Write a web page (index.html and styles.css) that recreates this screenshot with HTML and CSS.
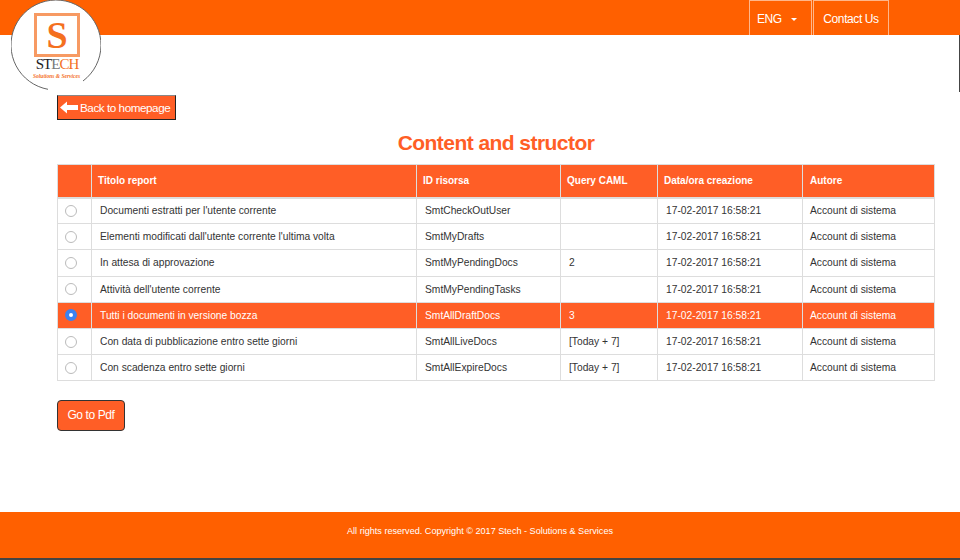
FILE: index.html
```html
<!DOCTYPE html>
<html lang="it">
<head>
    <meta charset="UTF-8">
    <title>Content and structor</title>
    <link rel="stylesheet" href="styles.css">
</head>
<body>
    <header class="topbar">
        <div class="logo">
            <svg class="logo-ring" width="90" height="90" viewBox="0 0 90 90"><path d="M37 89.3 A45 45 0 1 1 72 81" fill="none" stroke="#666" stroke-width="1"/></svg>
            <div class="logo-box"><span class="logo-s">S</span></div>
            <div class="logo-name">ST<span class="logo-te">E</span><span class="logo-ch">CH</span></div>
            <div class="logo-tag">Solutions &amp; Services</div>
        </div>
        <nav class="topnav">
            <a class="topnav-item lang">ENG <span class="caret"></span></a>
            <a class="topnav-item contact">Contact Us</a>
        </nav>
    </header>

    <main class="content">
        <a class="back-btn">
            <svg class="back-icon" width="18" height="13" viewBox="0 0 18 13"><path d="M0 6.5 L7 0.5 V4 H18 V9 H7 V12.5 Z" fill="#fff"/></svg>
            Back to homepage
        </a>
        <h1>Content and structor</h1>

        <table class="report-table">
            <thead>
                <tr>
                    <th class="col-radio"></th>
                    <th class="col-title">Titolo report</th>
                    <th class="col-id">ID risorsa</th>
                    <th class="col-query">Query CAML</th>
                    <th class="col-date">Data/ora creazione</th>
                    <th class="col-author">Autore</th>
                </tr>
            </thead>
            <tbody>
                <tr>
                    <td class="radio-cell"><span class="radio"></span></td>
                    <td>Documenti estratti per l'utente corrente</td>
                    <td>SmtCheckOutUser</td>
                    <td></td>
                    <td>17-02-2017 16:58:21</td>
                    <td class="author-cell">Account di sistema</td>
                </tr>
                <tr>
                    <td class="radio-cell"><span class="radio"></span></td>
                    <td>Elementi modificati dall'utente corrente l'ultima volta</td>
                    <td>SmtMyDrafts</td>
                    <td></td>
                    <td>17-02-2017 16:58:21</td>
                    <td class="author-cell">Account di sistema</td>
                </tr>
                <tr>
                    <td class="radio-cell"><span class="radio"></span></td>
                    <td>In attesa di approvazione</td>
                    <td>SmtMyPendingDocs</td>
                    <td>2</td>
                    <td>17-02-2017 16:58:21</td>
                    <td class="author-cell">Account di sistema</td>
                </tr>
                <tr>
                    <td class="radio-cell"><span class="radio"></span></td>
                    <td>Attività dell'utente corrente</td>
                    <td>SmtMyPendingTasks</td>
                    <td></td>
                    <td>17-02-2017 16:58:21</td>
                    <td class="author-cell">Account di sistema</td>
                </tr>
                <tr class="selected">
                    <td class="radio-cell"><span class="radio checked"></span></td>
                    <td>Tutti i documenti in versione bozza</td>
                    <td>SmtAllDraftDocs</td>
                    <td>3</td>
                    <td>17-02-2017 16:58:21</td>
                    <td class="author-cell">Account di sistema</td>
                </tr>
                <tr>
                    <td class="radio-cell"><span class="radio"></span></td>
                    <td>Con data di pubblicazione entro sette giorni</td>
                    <td>SmtAllLiveDocs</td>
                    <td>[Today + 7]</td>
                    <td>17-02-2017 16:58:21</td>
                    <td class="author-cell">Account di sistema</td>
                </tr>
                <tr>
                    <td class="radio-cell"><span class="radio"></span></td>
                    <td>Con scadenza entro sette giorni</td>
                    <td>SmtAllExpireDocs</td>
                    <td>[Today + 7]</td>
                    <td>17-02-2017 16:58:21</td>
                    <td class="author-cell">Account di sistema</td>
                </tr>
            </tbody>
        </table>

        <a class="pdf-btn">Go to Pdf</a>
    </main>

    <footer class="footer">All rights reserved. Copyright © 2017 Stech - Solutions &amp; Services</footer>
</body>
</html>
```

FILE: styles.css
```css
html, body {
    margin: 0;
    padding: 0;
}

body {
    width: 960px;
    height: 560px;
    overflow: hidden;
    display: flex;
    flex-direction: column;
    font-family: "Liberation Sans", Arial, sans-serif;
    font-size: 12px;
    color: #333;
    background-color: #fff;
}

.topbar {
    position: relative;
    flex: 0 0 35px;
    background-color: #ff6000;
    display: flex;
    justify-content: flex-end;
    padding-right: 71px;
}

/* thin dark edge on the right, under the bar */
.topbar::after {
    content: "";
    position: absolute;
    right: 0;
    top: 35px;
    width: 1px;
    height: 57px;
    background-color: #444;
}

.logo {
    position: absolute;
    left: 11px;
    top: 0;
    width: 90px;
    height: 90px;
    border-radius: 50%;
    background-color: #fff;
    text-align: center;
    font-family: "Liberation Serif", serif;
}

.logo-ring {
    position: absolute;
    left: 0;
    top: 0;
}

.logo-box {
    box-sizing: border-box;
    width: 46px;
    height: 44px;
    margin: 13px 0 0 23px;
    border: 3px solid #f79a63;
    display: flex;
    align-items: center;
    justify-content: center;
}

.logo-s {
    color: #f4701f;
    font-size: 38px;
    font-weight: bold;
    line-height: 38px;
}

.logo-name {
    width: 46px;
    margin: -1px 0 0 23px;
    font-size: 15px;
    line-height: 17px;
    letter-spacing: -1px;
    white-space: nowrap;
    color: #222;
}

.logo-te {
    color: #777;
}

.logo-ch {
    color: #f4701f;
}

.logo-tag {
    width: 46px;
    margin-left: 22px;
    font-size: 5.5px;
    line-height: 7px;
    font-style: italic;
    font-weight: bold;
    white-space: nowrap;
    color: #f4701f;
}

.topnav {
    display: flex;
    gap: 1px;
}

.topnav-item {
    box-sizing: border-box;
    height: 35px;
    border: 1px solid #ffb68a;
    border-bottom: none;
    color: #fff;
    font-size: 12px;
    letter-spacing: -0.4px;
    line-height: 36px;
    text-align: center;
}

.lang {
    width: 63px;
    padding-left: 7px;
    text-align: left;
}

.contact {
    width: 76px;
}

.caret {
    display: inline-block;
    margin-left: 6px;
    vertical-align: 2px;
    border-left: 3px solid transparent;
    border-right: 3px solid transparent;
    border-top: 3px solid #fff;
}

.content {
    flex: 1;
    padding: 60px 25px 0 57px;
}

.back-btn {
    box-sizing: border-box;
    display: flex;
    align-items: center;
    gap: 2px;
    width: 119px;
    height: 25px;
    padding-left: 2px;
    background-color: #ff5e26;
    border: 1px solid #222;
    border-top-color: #888;
    color: #fff;
    font-size: 11.7px;
    letter-spacing: -0.45px;
    white-space: nowrap;
}

.back-icon {
    flex: none;
}

h1 {
    margin: 10px 0 8px;
    text-align: center;
    font-size: 21px;
    letter-spacing: -0.55px;
    line-height: 26px;
    color: #ff5e26;
}

.report-table {
    width: 878px;
    table-layout: fixed;
    border-collapse: collapse;
    font-size: 10.25px;
}

.report-table th,
.report-table td {
    box-sizing: border-box;
    border: 1px solid #ddd;
    text-align: left;
    padding: 0 8px;
}

.report-table th {
    height: 33px;
    padding: 0 6px;
    background-color: #ff5e26;
    color: #fff;
    font-size: 10px;
    border-bottom-width: 2px;
}

.report-table td {
    height: 26.2px;
}

.col-radio { width: 34px; }
.col-title { width: 325px; }
.col-id { width: 144px; }
.col-query { width: 97px; }
.col-date { width: 145px; }

.report-table .col-author {
    padding-left: 7px;
}

.report-table .radio-cell {
    padding: 0 0 0 7px;
}

.report-table .author-cell {
    padding-left: 7px;
}

.selected td {
    background-color: #ff5e26;
    color: #fff;
}

.radio {
    display: block;
    box-sizing: border-box;
    width: 12px;
    height: 12px;
    border-radius: 50%;
    border: 1px solid #bbb;
    background-color: #fff;
}

.radio.checked {
    border: 4px solid #3b82f0;
}

.pdf-btn {
    box-sizing: border-box;
    display: block;
    width: 68px;
    height: 31px;
    margin-top: 19px;
    line-height: 29px;
    text-align: center;
    background-color: #ff5e26;
    border: 1px solid #333;
    border-radius: 4px;
    color: #fff;
    font-size: 12px;
    letter-spacing: -0.4px;
}

.footer {
    box-sizing: border-box;
    flex: 0 0 48px;
    background-color: #ff6000;
    border-bottom: 2px solid #444;
    padding-top: 14px;
    text-align: center;
    color: #fff;
    font-size: 9.1px;
    line-height: 11px;
}
```
